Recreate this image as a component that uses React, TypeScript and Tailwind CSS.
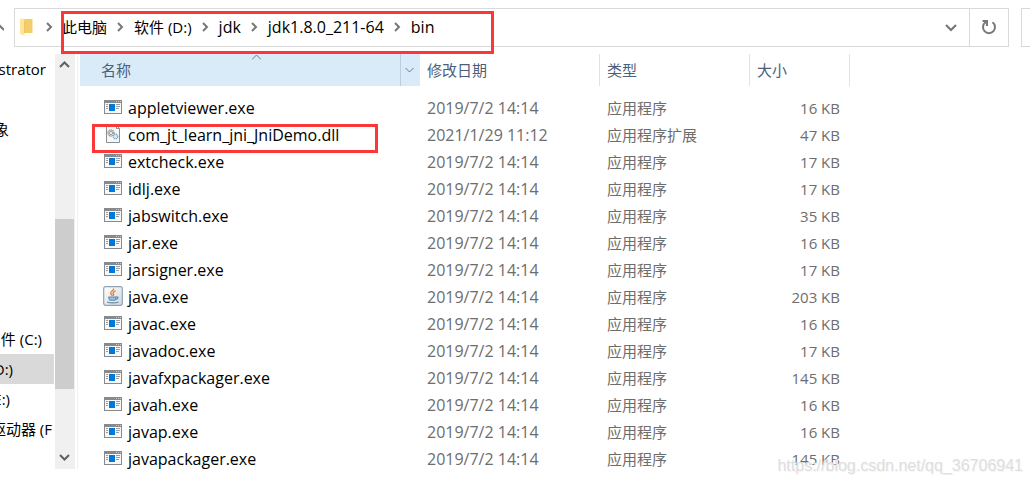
import React from 'react'

interface FileItem {
  name: string
  date: string
  type: string
  size: string
  icon: 'exe' | 'dll' | 'java'
}

const APP = '应用程序'
const DATE = '2019/7/2 14:14'

const files: FileItem[] = [
  { name: 'appletviewer.exe', date: DATE, type: APP, size: '16 KB', icon: 'exe' },
  { name: 'com_jt_learn_jni_JniDemo.dll', date: '2021/1/29 11:12', type: '应用程序扩展', size: '47 KB', icon: 'dll' },
  { name: 'extcheck.exe', date: DATE, type: APP, size: '17 KB', icon: 'exe' },
  { name: 'idlj.exe', date: DATE, type: APP, size: '17 KB', icon: 'exe' },
  { name: 'jabswitch.exe', date: DATE, type: APP, size: '35 KB', icon: 'exe' },
  { name: 'jar.exe', date: DATE, type: APP, size: '16 KB', icon: 'exe' },
  { name: 'jarsigner.exe', date: DATE, type: APP, size: '17 KB', icon: 'exe' },
  { name: 'java.exe', date: DATE, type: APP, size: '203 KB', icon: 'java' },
  { name: 'javac.exe', date: DATE, type: APP, size: '16 KB', icon: 'exe' },
  { name: 'javadoc.exe', date: DATE, type: APP, size: '17 KB', icon: 'exe' },
  { name: 'javafxpackager.exe', date: DATE, type: APP, size: '145 KB', icon: 'exe' },
  { name: 'javah.exe', date: DATE, type: APP, size: '16 KB', icon: 'exe' },
  { name: 'javap.exe', date: DATE, type: APP, size: '16 KB', icon: 'exe' },
  { name: 'javapackager.exe', date: DATE, type: APP, size: '145 KB', icon: 'exe' },
]

const crumbs = [
  { label: '此电脑', className: '' },
  { label: '软件 (D:)', className: '' },
  { label: 'jdk', className: 'text-base leading-[22px]' },
  { label: 'jdk1.8.0_211-64', className: 'text-base leading-[22px]' },
  { label: 'bin', className: 'text-base leading-[22px]' },
]

// the tree is scrolled sideways, so each label is cut at the left edge
const treeItems = [
  { label: 'strator', className: 'pr-2' },
  { label: '象', className: 'mt-[30px] pr-[45px]' },
  { label: '件 (C:)', className: 'mt-[180px] pr-3' },
  { label: '(D:)', className: 'pr-[41px] bg-[#d9d9d9]' },
  { label: '(E:)', className: 'pr-11' },
  { label: '驱动器 (F', className: 'pr-[2px]' },
]

const Chevron: React.FC<{ className?: string; d: string; w: number; h: number; stroke?: number }> = ({
  className,
  d,
  w,
  h,
  stroke = 2,
}) => (
  <svg className={className} width={w} height={h} viewBox={`0 0 ${w} ${h}`} fill="none" stroke="currentColor" strokeWidth={stroke} aria-hidden="true">
    <path d={d} />
  </svg>
)

const CrumbArrow = () => <Chevron className="shrink-0 text-[#777]" d="M1 1l4 4-4 4" w={7} h={10} />

const ExeIcon = () => (
  <svg width="18" height="14" viewBox="0 0 18 14" aria-hidden="true">
    <rect width="18" height="14" fill="#868a8e" />
    <rect x="1" y="3" width="16" height="10" fill="#f8f8f8" />
    <path d="M12 1.5h1M14 1.5h1M16 1.5h1" stroke="#c9cccf" />
    <path d="M2 4.5h2M2 6.5h2M2 8.5h2M12 4.5h4M12 6.5h4M12 8.5h3" stroke="#9a9da0" />
    <rect x="5" y="4" width="6" height="7" fill="#0078d7" />
  </svg>
)

const DllIcon = () => (
  <svg width="16" height="18" viewBox="0 0 16 18" fill="none" aria-hidden="true">
    <path d="M1.5.5h10l3 3v14h-13z" fill="#f8f8f8" stroke="#8c8f91" />
    <path d="M11.5.5v3h3" stroke="#8c8f91" />
    <circle cx="6" cy="8" r="3" stroke="#909090" strokeWidth="1.4" strokeDasharray="1.3 .6" />
    <circle cx="6" cy="8" r="1.6" stroke="#9c9c9c" />
    <circle cx="10.5" cy="11.5" r="2.3" stroke="#78a6c4" strokeWidth="1.3" strokeDasharray="1.2 .5" />
    <circle cx="10.5" cy="11.5" r="1" stroke="#b4d6ea" />
  </svg>
)

const JavaIcon = () => (
  <svg width="20" height="20" viewBox="0 0 20 20" fill="none" aria-hidden="true">
    <defs>
      <linearGradient id="tile" x1="0" y1="0" x2="1" y2="1">
        <stop stopColor="#fff" />
        <stop offset="1" stopColor="#cfd9e1" />
      </linearGradient>
    </defs>
    <rect x=".7" y=".7" width="18.6" height="18.6" rx="2" fill="url(#tile)" stroke="#8fa3b5" strokeWidth="1.2" />
    <path d="M10.5 2.5c1 2-3.5 3-2.8 5 .3.9 1.3 1.4 1.6 2.2M12.6 4.8c-1.8 1-3 1.9-2.3 3 .6.9.4 1.5-.3 2" stroke="#e8792b" strokeWidth="1.3" />
    <path d="M5.5 11h7.5l-.8 3.200H6.500z" fill="#a9bfcf" stroke="#5f88a8" />
    <path d="M13 11c2.800-.6 2.800 2-.3 2.400M4 16c2.500 1.200 9 1.200 11.500 0" stroke="#5f88a8" strokeWidth="1.200" />
  </svg>
)

const icons = { exe: <ExeIcon />, dll: <DllIcon />, java: <JavaIcon /> }

const AddressBar = () => (
  <header className="flex h-[39px] items-stretch">
    <div className="flex w-[14px] items-center text-[#777]">
      <Chevron className="-ml-1" d="M0 6l4-4 4 4" w={8} h={8} />
    </div>
    <div className="flex min-w-0 flex-1 items-stretch border border-[#d9d9d9]">
      <div className="flex items-center gap-[13px] pb-px pl-[5px]">
        <svg width="13" height="18" viewBox="0 0 13 18" aria-hidden="true">
          <path d="M3 1h9.5v14H3z" fill="#f3cd68" />
          <path d="M0 1l3-.5 1.5 2v15L0 16z" fill="#ffe59b" />
          <path d="M4.5 3v12" stroke="#e9bd50" strokeWidth=".7" />
        </svg>
        <CrumbArrow />
      </div>
      <nav aria-label="地址" className="relative ml-2 flex items-center gap-[10px] pr-[60px] pb-px pl-px">
        {crumbs.map((crumb, index) => (
          <React.Fragment key={crumb.label}>
            {index > 0 && <CrumbArrow />}
            <a href="#" className={`whitespace-nowrap text-black ${crumb.className}`}>{crumb.label}</a>
          </React.Fragment>
        ))}
        <span className="pointer-events-none absolute -bottom-2 left-0 right-0 top-[2px] z-10 border-3 border-[#fb3737]" />
      </nav>
      <button type="button" aria-label="历史记录" className="ml-auto flex w-9 items-center justify-center text-[#777]">
        <Chevron d="M1 2l5 5 5-5" w={12} h={9} stroke={2.2} />
      </button>
      <button type="button" aria-label="刷新" className="flex w-[39px] items-center justify-center border-l border-[#d9d9d9] pb-px text-[#777]">
        <svg width="16" height="16" viewBox="0 0 16 16" fill="none" stroke="currentColor" strokeWidth="2" aria-hidden="true">
          <path d="M11.5 3.300a6 6 0 1 1-7 0L6 2M1.500 2H6v5" />
        </svg>
      </button>
    </div>
    <input type="search" aria-label="搜索" className="ml-3 w-[9px] border border-r-0 border-[#d9d9d9]" />
  </header>
)

const TreePane = () => (
  <aside className="mb-[3px] flex w-[78px] shrink-0 border-r border-[#f2f2f2]">
    <ul className="w-[54px] overflow-hidden">
      {treeItems.map((item) => (
        <li key={item.label} className={`flex h-[30px] items-center justify-end whitespace-nowrap ${item.className}`}>
          {item.label}
        </li>
      ))}
    </ul>
    <div className="ml-px flex w-5 flex-col bg-[#f0f0f0] text-[#606060]">
      <button type="button" aria-label="向上滚动" className="flex h-[21px] items-center justify-center pr-px">
        <Chevron d="M1 7l4.5-4.5L10 7" w={11} h={9} />
      </button>
      <div className="grow-5" />
      <div className="mr-px h-[170px] bg-[#cdcdcd]" />
      <div className="grow-2" />
      <button type="button" aria-label="向下滚动" className="flex h-[23px] items-center justify-center pr-px">
        <Chevron d="M1 2l4.5 4.5L10 2" w={11} h={9} />
      </button>
    </div>
  </aside>
)

const FileTable = () => (
  <table className="ml-[2px] w-[770px] table-fixed border-separate border-spacing-0 self-start text-left">
    <thead className="text-[#4c607a]">
      <tr className="h-8">
        <th className="relative w-[340px] bg-[#d9ebf9] p-0 font-normal">
          <div className="flex h-8 items-center">
            <span className="flex-1 pl-[21px]">名称</span>
            <button type="button" aria-label="筛选" className="flex h-8 w-5 items-center justify-center border-l border-[#b9cfdf] pr-[2px] text-[#6d7a85]">
              <Chevron d="M.5 1l4 4 4-4" w={9} h={6} stroke={1} />
            </button>
          </div>
          <Chevron className="absolute left-[172px] top-0 text-[#6d7a85]" d="M0 5.5l4.5-4.5L9 5.5" w={9} h={7} stroke={1} />
        </th>
        <th className="w-[180px] border-r border-[#e2e2e2] py-0 pl-[7px] font-normal">修改日期</th>
        <th className="w-[150px] border-r border-[#e2e2e2] py-0 pl-[7px] font-normal">类型</th>
        <th className="w-[100px] border-r border-[#e2e2e2] py-0 pl-[7px] font-normal">大小</th>
      </tr>
    </thead>
    <tbody className="text-[#6d6d6d] before:block before:h-2">
      {files.map((file) => (
        <tr key={file.name} className="h-[27px]">
          <td className="relative p-0 pl-[23px] text-base leading-[22px] text-black">
            <div className="flex items-center gap-[5px]">
              <span className="flex h-[27px] w-5 shrink-0 items-center justify-center pb-px">{icons[file.icon]}</span>
              <span className="whitespace-nowrap">{file.name}</span>
            </div>
            {file.icon === 'dll' && (
              <span className="pointer-events-none absolute -bottom-[5px] left-3 right-[42px] top-[3px] border-3 border-[#fb3737]" />
            )}
          </td>
          <td className="p-0 pl-[7px] text-base leading-[22px]">{file.date}</td>
          <td className="p-0 pl-[7px]">{file.type}</td>
          <td className="p-0 pr-[10px] text-right">{file.size}</td>
        </tr>
      ))}
    </tbody>
  </table>
)

const App: React.FC = () => {
  return (
    <div className="relative min-h-screen overflow-hidden bg-white pt-2 font-['Open_Sans','Noto_Sans_CJK_SC',sans-serif] text-[15px] leading-[22px] text-black">
      <AddressBar />
      <main className="mt-[7px] flex">
        <TreePane />
        <FileTable />
      </main>
      <p className="pointer-events-none absolute bottom-[7px] right-[7px] font-['Liberation_Sans',sans-serif] text-base leading-[22px] text-[#dedede] [text-shadow:1px_1px_0_#f6f6f6]">
        https://blog.csdn.net/qq_36706941
      </p>
    </div>
  )
}

export default App
